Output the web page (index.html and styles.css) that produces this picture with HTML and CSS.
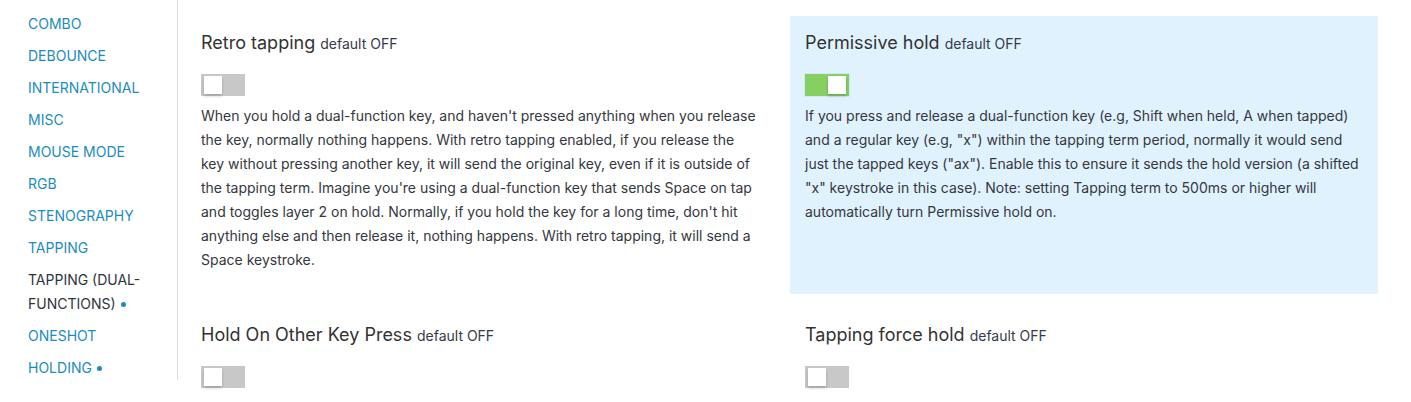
FILE: index.html
```html
<!DOCTYPE html>
<html>
<head>
<meta charset="utf-8">
<link rel="stylesheet" href="styles.css">
</head>
<body>
<div class="page">
  <nav class="sidebar">
    <ul class="nav">
      <li><a class="nav-link">COMBO</a></li>
      <li><a class="nav-link">DEBOUNCE</a></li>
      <li><a class="nav-link">INTERNATIONAL</a></li>
      <li><a class="nav-link">MISC</a></li>
      <li><a class="nav-link">MOUSE MODE</a></li>
      <li><a class="nav-link">RGB</a></li>
      <li><a class="nav-link">STENOGRAPHY</a></li>
      <li><a class="nav-link">TAPPING</a></li>
      <li><a class="nav-link active">TAPPING (DUAL-FUNCTIONS) <span class="dot"></span></a></li>
      <li><a class="nav-link">ONESHOT</a></li>
      <li><a class="nav-link">HOLDING <span class="dot"></span></a></li>
    </ul>
  </nav>
  <main class="main">
    <div class="grid">
      <section class="cell">
        <h3 class="title">Retro tapping <small class="default">default OFF</small></h3>
        <div class="toggle"><span class="knob"></span></div>
        <p class="desc">When you hold a dual-function key, and haven't pressed anything when you release the key, normally nothing happens. With retro tapping enabled, if you release the key without pressing another key, it will send the original key, even if it is outside of the tapping term. Imagine you're using a dual-function key that sends Space on tap and toggles layer 2 on hold. Normally, if you hold the key for a long time, don't hit anything else and then release it, nothing happens. With retro tapping, it will send a Space keystroke.</p>
      </section>
      <section class="cell highlighted">
        <h3 class="title">Permissive hold <small class="default">default OFF</small></h3>
        <div class="toggle on"><span class="knob"></span></div>
        <p class="desc">If you press and release a dual-function key (e.g, Shift when held, A when tapped) and a regular key (e.g, "x") within the tapping term period, normally it would send just the tapped keys ("ax"). Enable this to ensure it sends the hold version (a shifted "x" keystroke in this case). Note: setting Tapping term to 500ms or higher will automatically turn Permissive hold on.</p>
      </section>
      <section class="cell">
        <h3 class="title">Hold On Other Key Press <small class="default">default OFF</small></h3>
        <div class="toggle"><span class="knob"></span></div>
      </section>
      <section class="cell">
        <h3 class="title">Tapping force hold <small class="default">default OFF</small></h3>
        <div class="toggle"><span class="knob"></span></div>
      </section>
    </div>
  </main>
</div>
</body>
</html>
```
FILE: styles.css
```css
* { box-sizing: border-box; }
html, body {
  margin: 0;
  padding: 0;
  background: #fff;
  font-family: Inter, "Noto Sans", sans-serif;
  color: #333;
  overflow: hidden;
}
.page {
  display: flex;
  align-items: flex-start;
  height: 402px;
}
.sidebar {
  width: 178px;
  flex: none;
  border-right: 1px solid #dcdcdc;
  padding: 8px 28px 0 28px;
  height: 380px;
}
.nav {
  list-style: none;
  margin: 0;
  padding: 0;
}
.nav li {
  padding: 4px 0;
  line-height: 24px;
  font-size: 14px;
}
.nav-link {
  color: #1a8cbf;
  text-decoration: none;
}
.nav-link.active {
  color: #2f3340;
}
.dot {
  display: inline-block;
  width: 5px;
  height: 5px;
  border-radius: 50%;
  background: #1a8cbf;
  vertical-align: middle;
  margin-left: 1px;
  position: relative;
  top: -1px;
}
.main {
  flex: 1;
  padding: 16px 0 0 8px;
}
.grid {
  display: grid;
  grid-template-columns: 588px 588px;
  column-gap: 16px;
  row-gap: 14px;
}
.cell {
  padding: 15px 15px 22px 15px;
}
.cell.highlighted {
  background: #e0f2fd;
}
.title {
  margin: 0;
  font-size: 18px;
  font-weight: 400;
  line-height: 24px;
  color: #333;
}
.default {
  font-size: 14px;
  color: #343a4a;
}
.toggle {
  margin-top: 18px;
  width: 44px;
  height: 22px;
  background: #c8c8c8;
  position: relative;
}
.toggle .knob {
  position: absolute;
  left: 3px;
  top: 2px;
  width: 18px;
  height: 18px;
  background: #fff;
  box-shadow: 0 2px 3px rgba(0,0,0,0.2);
}
.toggle.on {
  background: #86cf62;
  outline: 1px solid #cfe9f5;
}
.toggle.on .knob {
  left: 23px;
}
.desc {
  margin: 8px 0 0 0;
  font-size: 14px;
  line-height: 24px;
  color: #343740;
}
```
